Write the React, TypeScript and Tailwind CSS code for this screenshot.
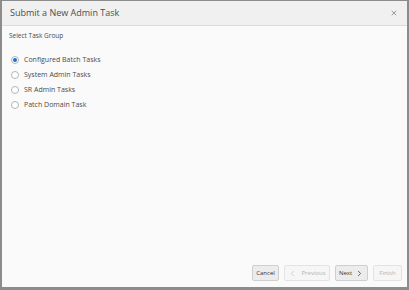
import { ChevronLeft, ChevronRight, X } from 'lucide-react'

const groups = ['Configured Batch Tasks', 'System Admin Tasks', 'SR Admin Tasks', 'Patch Domain Task']

function Radio({ label, checked }: { label: string; checked?: boolean }) {
  return (
    <label className="flex h-[15px] items-center gap-[5px]">
      <span className="flex h-[8px] w-[8px] items-center justify-center rounded-full border border-[#b5b5b5] bg-white">
        {checked && <span className="h-[4px] w-[4px] rounded-full bg-[#1a6fd1]" />}
      </span>
      <span className="text-[7px] text-[#4a4a4a]">{label}</span>
    </label>
  )
}

export default function App() {
  return (
    <div
      className="flex h-[290px] w-[409px] flex-col border-x-2 border-b-[3px] border-t border-[#8c8c8c] bg-[#fafafa]"
      style={{ fontFamily: '"Open Sans", "Noto Sans", sans-serif' }}
    >
      <div className="flex h-[25px] items-center justify-between border-b border-[#dcdcdc] bg-[#f0f0f0] pl-[8px] pr-[9px]">
        <span className="text-[9px] text-[#4d4d4d]">Submit a New Admin Task</span>
        <X size={8} strokeWidth={2.5} className="text-[#8a8a8a]" />
      </div>
      <div className="flex-1 px-[7px] pt-[5px]">
        <p className="text-[6.5px] text-[#4a4a4a]">Select Task Group</p>
        <div className="mt-[12px] flex flex-col pl-[2px]">
          {groups.map((g, i) => (
            <Radio key={g} label={g} checked={i === 0} />
          ))}
        </div>
      </div>
      <div className="flex justify-end gap-[5px] pb-[6px] pr-[5px]">
        <button className="h-[16px] w-[27px] rounded-[2px] border border-[#cfcfcf] bg-[#ececec] text-[6px] text-[#333]">
          Cancel
        </button>
        <button className="flex h-[16px] w-[46px] items-center justify-center gap-[4px] rounded-[2px] border border-[#e3e3e3] bg-[#f6f6f6] text-[6px] text-[#b3b3b3]">
          <ChevronLeft size={9} strokeWidth={1.5} />
          Previous
        </button>
        <button className="flex h-[16px] w-[33px] items-center justify-center gap-[3px] rounded-[2px] border border-[#cfcfcf] bg-[#ececec] text-[6px] text-[#333]">
          Next
          <ChevronRight size={9} strokeWidth={2} />
        </button>
        <button className="h-[16px] w-[29px] rounded-[2px] border border-[#e3e3e3] bg-[#f6f6f6] text-[6px] text-[#b3b3b3]">
          Finish
        </button>
      </div>
    </div>
  )
}
